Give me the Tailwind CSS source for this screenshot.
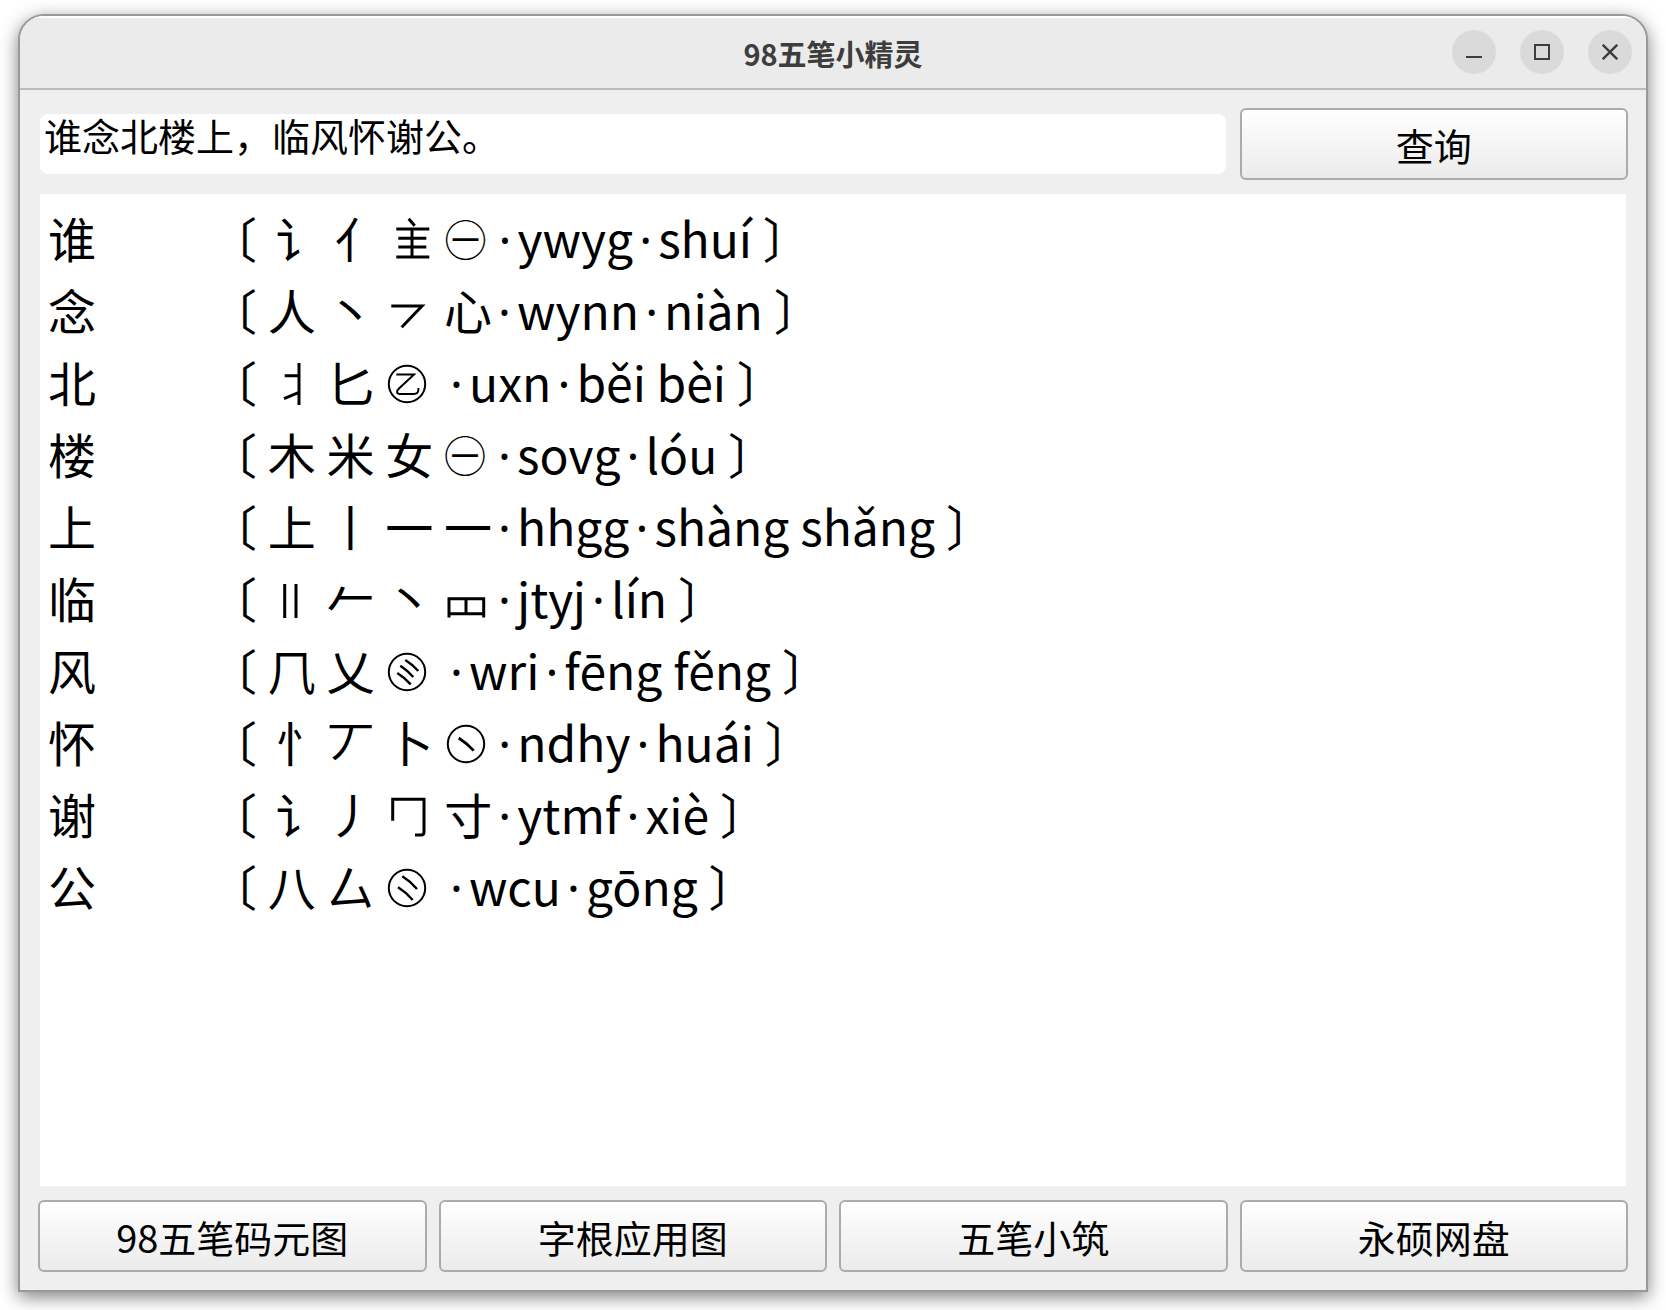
<!DOCTYPE html>
<html lang="zh-CN">
<head>
<meta charset="utf-8">
<title>98五笔小精灵</title>
<script src="https://cdn.jsdelivr.net/npm/@tailwindcss/browser@4"></script>
</head>
<body class="flex min-h-screen flex-col bg-white px-[18px] pt-[14px] pb-[18px] font-['Noto_Sans_CJK_SC',sans-serif] text-black">
<main class="flex grow flex-col overflow-hidden rounded-t-[26px] border-2 border-[#999] bg-[#efefef] shadow-[0_5px_18px_rgba(0,0,0,0.5)]">
  <header class="grid h-[74px] grid-cols-[1fr_auto_1fr] items-center border-t-2 border-b-2 border-t-white border-b-[#bcbcbc] bg-[#ebebeb] px-3.5">
    <span></span>
    <h1 class="pt-0.5 text-[29px] font-bold text-[#3d3d3d]">98五笔小精灵</h1>
    <div class="flex gap-6 justify-self-end pb-0.5">
      <button aria-label="最小化" class="flex size-11 items-center justify-center rounded-full bg-[#dadada]"><svg class="size-4" viewBox="0 0 16 16"><path d="M0 13H16" stroke="#3d3d3d" stroke-width="2"/></svg></button>
      <button aria-label="最大化" class="flex size-11 items-center justify-center rounded-full bg-[#dadada]"><svg class="size-4" viewBox="0 0 16 16"><path d="M1 1H15V15H1Z" fill="none" stroke="#3d3d3d" stroke-width="2"/></svg></button>
      <button aria-label="关闭" class="flex size-11 items-center justify-center rounded-full bg-[#dadada]"><svg class="size-4" viewBox="0 0 16 16"><path d="M.7.7L15.3 15.3M15.3.7L.7 15.3" stroke="#3d3d3d" stroke-width="2.4"/></svg></button>
    </div>
  </header>
  <div class="flex grow flex-col px-[18px] pt-[18px] pb-[18px]">
    <form class="grid grid-cols-4 items-center gap-x-3">
      <input aria-label="汉字" value="谁念北楼上，临风怀谢公。" class="col-span-3 mr-0.5 ml-0.5 h-[60px] rounded-lg bg-white px-1 pb-5 text-[38px] outline-none">
      <button type="button" class="h-[72px] rounded-md border-2 border-[#ababab] bg-linear-to-b from-white to-[#ebebeb] pt-0.5 text-[38px] leading-none">查询</button>
    </form>
    <section class="mx-0.5 my-3.5 grow bg-white py-[7px] pl-2">
      <table class="text-[48px] leading-[72px] whitespace-nowrap">
        <tbody>
          <tr><th scope="row" class="w-[161px] p-0 text-left font-normal">谁</th><td class="p-0">〔 <span class="inline-block w-[59px] pl-2">讠</span><span class="inline-block w-[59px] pl-2">亻</span><svg role="img" aria-label="隹旁" class="inline-block size-12 align-[-6px]" viewBox="0 0 48 48" fill="none" stroke="currentColor" stroke-width="3"><path d="M22.7 2.7L28.7 9.8M10.3 13H43.3M12.3 22.3H40.3M12.3 31H40.3M10.3 41H43.3M26 13V41"/></svg> <span class="inline-block w-12 align-[2px] text-[42px] leading-none">㊀</span><span class="inline-block w-[25px] text-center font-['Noto_Sans'] leading-none">·</span>ywyg<span class="inline-block w-[25px] text-center font-['Noto_Sans'] leading-none">·</span>shuí 〕</td></tr>
          <tr><th scope="row" class="p-0 text-left font-normal">念</th><td class="p-0">〔 人 丶 <svg role="img" aria-label="横撇" class="inline-block size-12 align-[-6px]" viewBox="0 0 48 48" fill="none" stroke="currentColor" stroke-width="3"><path d="M6.3 18H37L16.7 39.3"/></svg> 心<span class="inline-block w-[25px] text-center font-['Noto_Sans'] leading-none">·</span>wynn<span class="inline-block w-[25px] text-center font-['Noto_Sans'] leading-none">·</span>niàn 〕</td></tr>
          <tr><th scope="row" class="p-0 text-left font-normal">北</th><td class="p-0">〔 <svg role="img" aria-label="北字左旁" class="inline-block size-12 align-[-6px]" viewBox="0 0 48 48" fill="none" stroke="currentColor" stroke-width="3"><path d="M31 3V45M16.7 15.7H31M16 38.6L31 32.3"/></svg> 匕 <svg role="img" aria-label="圈乙" class="inline-block size-12 align-[-6px]" viewBox="0 0 48 48" fill="none" stroke="currentColor" stroke-width="2"><circle cx="22" cy="24" r="18.2"/><path d="M11.3 14.5H29L14 28.5C10.5 32 12 34 16 34H28.5C32.5 34 33.5 32.5 33.5 28"/></svg> <span class="inline-block w-[25px] text-center font-['Noto_Sans'] leading-none">·</span>uxn<span class="inline-block w-[25px] text-center font-['Noto_Sans'] leading-none">·</span>běi bèi 〕</td></tr>
          <tr><th scope="row" class="p-0 text-left font-normal">楼</th><td class="p-0">〔 木 米 女 <span class="inline-block w-12 align-[2px] text-[42px] leading-none">㊀</span><span class="inline-block w-[25px] text-center font-['Noto_Sans'] leading-none">·</span>sovg<span class="inline-block w-[25px] text-center font-['Noto_Sans'] leading-none">·</span>lóu 〕</td></tr>
          <tr><th scope="row" class="p-0 text-left font-normal">上</th><td class="p-0">〔 上 丨 一 一<span class="inline-block w-[25px] text-center font-['Noto_Sans'] leading-none">·</span>hhgg<span class="inline-block w-[25px] text-center font-['Noto_Sans'] leading-none">·</span>shàng shǎng 〕</td></tr>
          <tr><th scope="row" class="p-0 text-left font-normal">临</th><td class="p-0">〔 <svg role="img" aria-label="两竖" class="inline-block size-12 align-[-6px]" viewBox="0 0 48 48" fill="none" stroke="currentColor" stroke-width="3"><path d="M16.7 8V42M28 8V42"/></svg> 𠂉 丶 <svg role="img" aria-label="临字底" class="inline-block size-12 align-[-6px]" viewBox="0 0 48 48" fill="none" stroke="currentColor" stroke-width="3"><path d="M5 41.5V22.7H39.7V41.5M5 37.7H39.7M22 22.7V37.7"/></svg><span class="inline-block w-[25px] text-center font-['Noto_Sans'] leading-none">·</span>jtyj<span class="inline-block w-[25px] text-center font-['Noto_Sans'] leading-none">·</span>lín 〕</td></tr>
          <tr><th scope="row" class="p-0 text-left font-normal">风</th><td class="p-0">〔 𠘨 乂 <svg role="img" aria-label="圈三捺" class="inline-block size-12 align-[-6px]" viewBox="0 0 48 48" fill="none" stroke="currentColor" stroke-width="2"><circle cx="22" cy="24" r="18.2"/><path d="M20.3 12Q27.5 16.5 33.3 23M15.3 17.7Q22.5 22.3 28.3 29M12.3 25Q19.5 29.6 25.7 36.3" stroke-width="2.5"/></svg> <span class="inline-block w-[25px] text-center font-['Noto_Sans'] leading-none">·</span>wri<span class="inline-block w-[25px] text-center font-['Noto_Sans'] leading-none">·</span>fēng fěng 〕</td></tr>
          <tr><th scope="row" class="p-0 text-left font-normal">怀</th><td class="p-0">〔 <span class="inline-block w-[59px] pl-2">忄</span>丆 卜 <svg role="img" aria-label="圈捺" class="inline-block size-12 align-[-6px]" viewBox="0 0 48 48" fill="none" stroke="currentColor" stroke-width="2"><circle cx="22" cy="24" r="18.2"/><path d="M14.7 18Q22.5 23 29.7 30.7" stroke-width="2.7"/></svg><span class="inline-block w-[25px] text-center font-['Noto_Sans'] leading-none">·</span>ndhy<span class="inline-block w-[25px] text-center font-['Noto_Sans'] leading-none">·</span>huái 〕</td></tr>
          <tr><th scope="row" class="p-0 text-left font-normal">谢</th><td class="p-0">〔 <span class="inline-block w-[59px] pl-2">讠</span>丿 <svg role="img" aria-label="身字框" class="inline-block size-12 align-[-6px]" viewBox="0 0 48 48" fill="none" stroke="currentColor" stroke-width="3"><path d="M6.7 28.7V7.3H38V40Q38 43 35 43H29"/></svg> 寸<span class="inline-block w-[25px] text-center font-['Noto_Sans'] leading-none">·</span>ytmf<span class="inline-block w-[25px] text-center font-['Noto_Sans'] leading-none">·</span>xiè 〕</td></tr>
          <tr><th scope="row" class="p-0 text-left font-normal">公</th><td class="p-0">〔 八 厶 <svg role="img" aria-label="圈两捺" class="inline-block size-12 align-[-6px]" viewBox="0 0 48 48" fill="none" stroke="currentColor" stroke-width="2"><circle cx="22" cy="24" r="18.2"/><path d="M17.3 12.3Q25 17 32 25M13 23.3Q20.7 28 27.7 36" stroke-width="2.5"/></svg> <span class="inline-block w-[25px] text-center font-['Noto_Sans'] leading-none">·</span>wcu<span class="inline-block w-[25px] text-center font-['Noto_Sans'] leading-none">·</span>gōng 〕</td></tr>
        </tbody>
      </table>
    </section>
    <nav class="grid grid-cols-4 gap-3">
      <button type="button" class="h-[72px] rounded-md border-2 border-[#ababab] bg-linear-to-b from-white to-[#ebebeb] pt-0.5 text-[38px] leading-none">98五笔码元图</button>
      <button type="button" class="h-[72px] rounded-md border-2 border-[#ababab] bg-linear-to-b from-white to-[#ebebeb] pt-0.5 text-[38px] leading-none">字根应用图</button>
      <button type="button" class="h-[72px] rounded-md border-2 border-[#ababab] bg-linear-to-b from-white to-[#ebebeb] pt-0.5 text-[38px] leading-none">五笔小筑</button>
      <button type="button" class="h-[72px] rounded-md border-2 border-[#ababab] bg-linear-to-b from-white to-[#ebebeb] pt-0.5 text-[38px] leading-none">永硕网盘</button>
    </nav>
  </div>
</main>
</body>
</html>
